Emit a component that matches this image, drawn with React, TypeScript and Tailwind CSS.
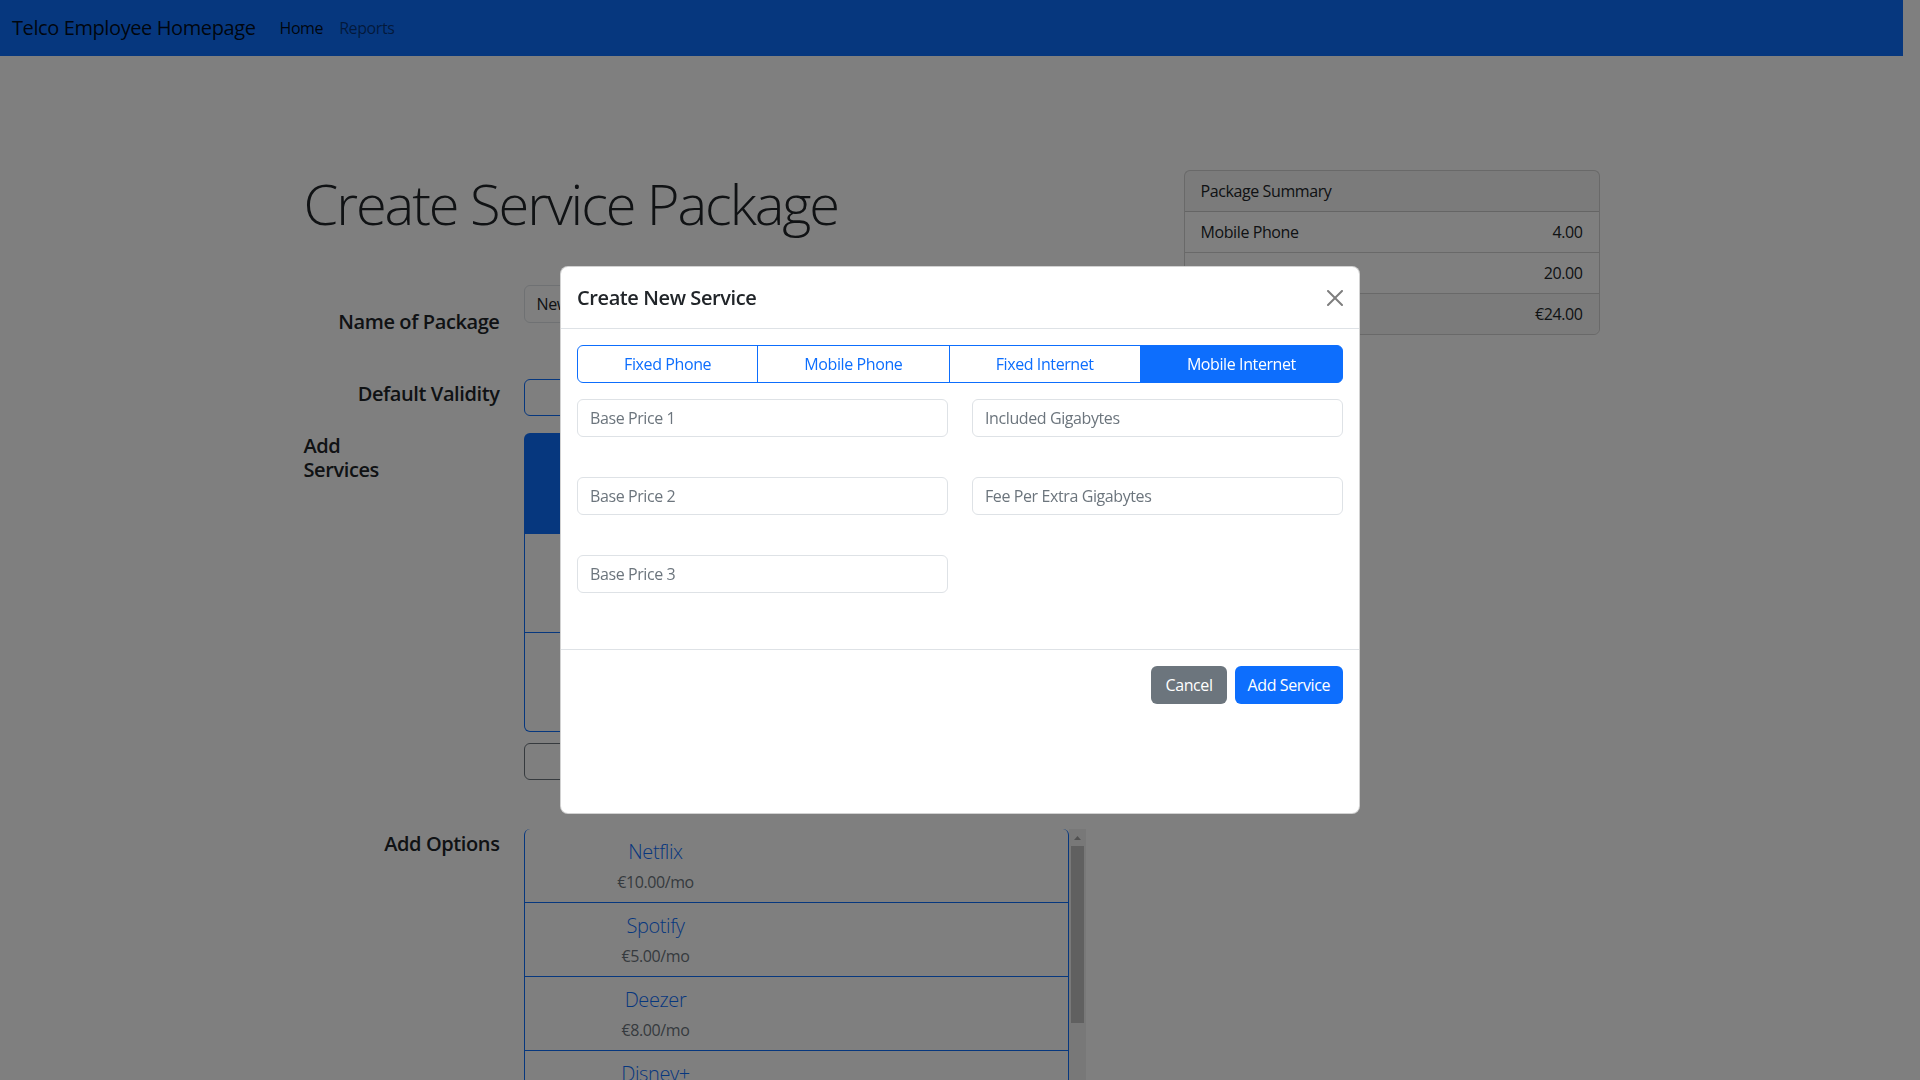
import React from 'react';

const options = [
  { name: 'Netflix', price: '€10.00/mo' },
  { name: 'Spotify', price: '€5.00/mo' },
  { name: 'Deezer', price: '€8.00/mo' },
  { name: 'Disney+', price: '€7.00/mo' },
  { name: 'Amazon Prime', price: '€6.00/mo' },
];

const serviceTabs = ['Fixed Phone', 'Mobile Phone', 'Fixed Internet', 'Mobile Internet'];

const Navbar = () => (
  <nav className="flex h-14 items-center bg-[#0d6efd] px-3">
    <span className="mr-4 text-[20px] leading-[30px] text-[rgba(0,0,0,0.9)]">Telco Employee Homepage</span>
    <a className="px-2 text-base text-[rgba(0,0,0,0.9)]">Home</a>
    <a className="px-2 text-base text-[rgba(0,0,0,0.55)]">Reports</a>
  </nav>
);

const PackageForm = () => (
  <div className="w-[856px]">
    <h1 className="text-[56px] font-light leading-[1.2] tracking-[-0.037em] text-[#212529]">Create Service Package</h1>

    {/* Name */}
    <div className="mt-12 flex items-start gap-6">
      <label className="w-[196px] pt-[22px] text-right text-[20px] font-semibold leading-[30px] text-[#212529]">Name of Package</label>
      <input
        className="h-[38px] w-[562px] rounded-md border border-[#dee2e6] px-3 text-base text-[#212529] outline-none"
        defaultValue="New Package"
      />
    </div>

    {/* Validity */}
    <div className="mt-[42px] flex items-start gap-6">
      <label className="w-[196px] text-right text-[20px] font-semibold leading-[30px] text-[#212529]">Default Validity</label>
      <div className="flex h-[37px] w-[562px]">
        {['12 Months', '24 Months', '36 Months'].map((m, i) => (
          <button
            key={m}
            className={`flex-1 border border-[#0d6efd] text-base text-[#0d6efd] ${i === 0 ? 'rounded-l-md' : '-ml-px'} ${i === 2 ? 'rounded-r-md' : ''}`}
          >
            {m}
          </button>
        ))}
      </div>
    </div>

    {/* Services */}
    <div className="mt-[17px] flex items-start gap-6">
      <div className="w-[196px] pt-px">
        <span className="block w-[90px] text-[20px] font-semibold leading-6 text-[#212529]">Add Services</span>
      </div>
      <div className="w-[562px]">
        <div className="flex flex-col">
          <div className="flex h-[101px] flex-col items-center justify-center rounded-t-md bg-[#0d6efd] text-white">
            <span className="text-[20px] font-light">Mobile Phone</span>
            <span className="text-base">€4.00/mo</span>
          </div>
          <div className="flex h-[99px] flex-col items-center justify-center border-x border-b border-[#0d6efd]">
            <span className="text-[20px] font-light text-[#0d6efd]">Fixed Internet</span>
            <span className="text-base text-[#6c757d]">€20.00/mo</span>
          </div>
          <div className="flex h-[99px] flex-col items-center justify-center rounded-b-md border-x border-b border-[#0d6efd]">
            <span className="text-[20px] font-light text-[#0d6efd]">Fixed Phone</span>
            <span className="text-base text-[#6c757d]">€3.00/mo</span>
          </div>
        </div>
        <button className="mt-[11px] h-[37px] w-full rounded-md border border-[#6c757d] text-base text-[#6c757d]">+ Create New Service</button>
      </div>
    </div>

    {/* Options */}
    <div className="mt-[49px] flex items-start gap-6">
      <label className="w-[196px] text-right text-[20px] font-semibold leading-[30px] text-[#212529]">Add Options</label>
      <div className="flex h-[420px] w-[562px]">
        <div className="flex-1 overflow-hidden rounded-t-md border-x border-[#0d6efd]">
          {options.map((o) => (
            <div key={o.name} className="border-b border-[#0d6efd] py-2">
              <div className="w-[262px] text-center">
                <div className="text-[20px] font-light leading-[30px] text-[#0d6efd]">{o.name}</div>
                <div className="mt-[3px] text-base leading-6 text-[#6c757d]">{o.price}</div>
              </div>
            </div>
          ))}
        </div>
        {/* scrollbar */}
        <div className="flex w-[17px] flex-col items-center bg-[#f1f1f1]">
          <div className="flex h-[17px] items-center justify-center">
            <svg width="7" height="4" viewBox="0 0 7 4">
              <path d="M3.5 0 L7 4 L0 4 Z" fill="#a3a3a3" />
            </svg>
          </div>
          <div className="h-[177px] w-[13px] bg-[#c1c1c1]" />
        </div>
      </div>
    </div>
  </div>
);

const PackageSummary = () => (
  <div className="w-[416px] self-start rounded-md border border-[rgba(0,0,0,0.175)] text-base text-[#212529]">
    <div className="border-b border-[rgba(0,0,0,0.175)] bg-[rgba(0,0,0,0.03)] px-4 py-2 leading-6">Package Summary</div>
    <div className="flex justify-between border-b border-[rgba(0,0,0,0.175)] px-4 py-2 leading-6">
      <span>Mobile Phone</span>
      <span>4.00</span>
    </div>
    <div className="flex justify-between border-b border-[rgba(0,0,0,0.175)] px-4 py-2 leading-6">
      <span>Fixed Internet</span>
      <span>20.00</span>
    </div>
    <div className="flex justify-between rounded-b-md bg-[rgba(0,0,0,0.03)] px-4 py-2 leading-6">
      <span>Total</span>
      <span>€24.00</span>
    </div>
  </div>
);

const inputCls =
  'mb-10 h-[38px] w-full rounded-md border border-[#dee2e6] px-3 text-base text-[#212529] outline-none placeholder:text-[#6c757d]';

const CreateServiceModal = () => (
  <div className="fixed inset-0 z-50 flex items-center justify-center">
    <div className="flex h-[548px] w-[800px] flex-col rounded-lg border border-[rgba(0,0,0,0.175)] bg-white text-[#212529]">
      <div className="flex items-center justify-between border-b border-[#dee2e6] px-4 pb-[15px] pt-4">
        <h5 className="text-[20px] font-semibold leading-[30px]">Create New Service</h5>
        <svg width="16" height="16" viewBox="0 0 16 16" className="opacity-50">
          <path d="M.293.293a1 1 0 0 1 1.414 0L8 6.586 14.293.293a1 1 0 1 1 1.414 1.414L9.414 8l6.293 6.293a1 1 0 0 1-1.414 1.414L8 9.414l-6.293 6.293a1 1 0 0 1-1.414-1.414L6.586 8 .293 1.707a1 1 0 0 1 0-1.414z" fill="#000" />
        </svg>
      </div>
      <div className="px-4 pt-4">
        <div className="flex h-[38px]">
          {serviceTabs.map((t, i) => {
            const active = t === 'Mobile Internet';
            return (
              <button
                key={t}
                className={`flex-auto border border-[#0d6efd] px-3 text-base ${active ? 'bg-[#0d6efd] text-white' : 'bg-white text-[#0d6efd]'} ${i === 0 ? 'rounded-l-md' : '-ml-px'} ${i === serviceTabs.length - 1 ? 'rounded-r-md' : ''}`}
              >
                {t}
              </button>
            );
          })}
        </div>
        <div className="mt-4 flex gap-6 pb-4">
          <div className="flex-1">
            <input className={inputCls} placeholder="Base Price 1" />
            <input className={inputCls} placeholder="Base Price 2" />
            <input className={inputCls} placeholder="Base Price 3" />
          </div>
          <div className="flex-1">
            <input className={inputCls} placeholder="Included Gigabytes" />
            <input className={inputCls} placeholder="Fee Per Extra Gigabytes" />
          </div>
        </div>
      </div>
      <div className="flex justify-end gap-2 border-t border-[#dee2e6] p-4">
        <button className="h-[38px] rounded-md bg-[#6c757d] px-[14px] text-base text-white">Cancel</button>
        <button className="h-[38px] rounded-md bg-[#0d6efd] px-[13px] text-base text-white">Add Service</button>
      </div>
    </div>
  </div>
);

export default function App() {
  return (
    <div className="relative h-screen overflow-hidden bg-white pr-[17px] font-['Open_Sans',sans-serif] tracking-tight">
      <Navbar />
      <div className="mx-auto w-[1320px] px-3 pt-[114px]">
        <div className="flex items-start justify-between">
          <PackageForm />
          <PackageSummary />
        </div>
      </div>
      <div className="fixed inset-0 z-40 bg-black/50" />
      <CreateServiceModal />
    </div>
  );
}
